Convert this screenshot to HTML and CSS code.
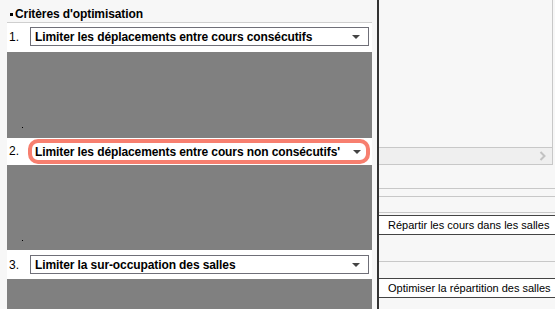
FILE: index.html
```html
<!DOCTYPE html>
<html lang="fr">
<head>
    <meta charset="UTF-8">
    <title>Critères d'optimisation</title>
    <link rel="stylesheet" href="styles.css">
</head>
<body>
    <div class="app">
        <!-- Critères -->
        <div class="criteres">
            <div class="titre"><span class="puce"></span>Critères d'optimisation</div>

            <div class="ligne ligne-1">
                <span class="num">1.</span>
                <div class="choix">
                    <span>Limiter les déplacements entre cours consécutifs</span>
                    <span class="fleche"></span>
                </div>
            </div>
            <div class="zone zone-1"><span class="point"></span></div>

            <div class="ligne ligne-2">
                <span class="num">2.</span>
                <div class="choix actif">
                    <span>Limiter les déplacements entre cours non consécutifs'</span>
                    <span class="fleche"></span>
                </div>
            </div>
            <div class="zone zone-2"><span class="point"></span></div>

            <div class="ligne ligne-3">
                <span class="num">3.</span>
                <div class="choix">
                    <span>Limiter la sur-occupation des salles</span>
                    <span class="fleche"></span>
                </div>
            </div>
            <div class="zone zone-3"></div>
        </div>

        <div class="separateur"></div>

        <!-- Panneau de droite -->
        <div class="droite">
            <div class="grille">
                <div class="grille-corps"></div>
                <div class="defilement">
                    <svg class="chevron" width="7" height="10" viewBox="0 0 7 10">
                        <polyline points="1.5,1 5.5,5 1.5,9" fill="none" stroke="#c2c2c2" stroke-width="2"/>
                    </svg>
                </div>
            </div>
            <div class="vide h23"></div>
            <div class="trait"></div>
            <div class="vide h7"></div>
            <div class="trait"></div>
            <div class="vide h15"></div>
            <div class="trait"></div>
            <div class="vide h2"></div>
            <div class="bouton">Répartir les cours dans les salles</div>
            <div class="vide h26"></div>
            <div class="trait"></div>
            <div class="vide h16"></div>
            <div class="bouton">Optimiser la répartition des salles</div>
        </div>
    </div>
</body>
</html>
```

FILE: styles.css
```css
/* base */
html, body {
    margin: 0;
    padding: 0;
}

body {
    font-family: "Liberation Sans", Arial, sans-serif;
    font-size: 11px;
    color: #000;
    background-color: #f7f7f7;
}

.app {
    display: flex;
    width: 555px;
    height: 309px;
    overflow: hidden;
}

/* colonne des critères */
.criteres {
    width: 365px;
    padding-left: 7px;
    padding-right: 5px;
    display: flex;
    flex-direction: column;
}

.titre {
    height: 26px;
    border-bottom: 1px solid #cfcfcf;
    font-weight: bold;
    font-size: 12px;
    letter-spacing: -0.1px;
    display: flex;
    align-items: center;
    padding-left: 3px;
    padding-top: 6px;
    box-sizing: border-box;
}

.puce {
    width: 3px;
    height: 3px;
    background-color: #000;
    margin-right: 2px;
    margin-top: 1px;
}

.ligne {
    display: flex;
    align-items: flex-start;
    background-color: #fff;
    flex-shrink: 0;
    box-sizing: border-box;
}

.ligne-1 {
    height: 29px;
    padding-top: 4px;
}

.ligne-2 {
    height: 27px;
    padding-top: 1px;
}

.ligne-3 {
    height: 29px;
    padding-top: 5px;
}

.num {
    width: 23px;
    padding-left: 2px;
    box-sizing: border-box;
    font-size: 12px;
    line-height: 20px;
}

.ligne-2 .num {
    line-height: 25px;
}

.choix {
    width: 339px;
    height: 19px;
    border: 1px solid #6f6f78;
    background-color: #fff;
    box-sizing: border-box;
    display: flex;
    align-items: center;
    justify-content: space-between;
    padding-left: 4px;
    padding-right: 8px;
    font-weight: bold;
    font-size: 12px;
    letter-spacing: -0.1px;
    white-space: nowrap;
}

.choix.actif {
    width: 342px;
    height: 25px;
    margin-left: -2px;
    border: 4px solid #f77f6f;
    border-radius: 10px;
    padding-left: 3px;
    padding-right: 5px;
}

.fleche {
    width: 0;
    height: 0;
    border-left: 4px solid transparent;
    border-right: 4px solid transparent;
    border-top: 4px solid #444;
}

.zone {
    background-color: #808080;
    flex-shrink: 0;
    padding-left: 15px;
    box-sizing: border-box;
}

.zone-1 {
    height: 86px;
    padding-top: 75px;
}

.zone-2 {
    height: 85px;
    padding-top: 75px;
}

.zone-3 {
    height: 30px;
}

.point {
    display: block;
    width: 1px;
    height: 1px;
    background-color: #000;
}

.separateur {
    width: 2px;
    background-color: #333;
    flex-shrink: 0;
}

/* panneau de droite */
.droite {
    flex: 1;
    display: flex;
    flex-direction: column;
}

.grille {
    width: 173px;
    height: 165px;
    border-right: 1px solid #c8c8c8;
    display: flex;
    flex-direction: column;
    flex-shrink: 0;
}

.grille-corps {
    height: 147px;
    border-bottom: 1px solid #c8c8c8;
}

.defilement {
    height: 16px;
    background-color: #efefef;
    border-bottom: 1px solid #c8c8c8;
    display: flex;
    align-items: center;
    justify-content: flex-end;
    padding-right: 6px;
}

.vide {
    flex-shrink: 0;
}

.h2 { height: 2px; }
.h7 { height: 7px; }
.h15 { height: 15px; }
.h16 { height: 16px; }
.h23 { height: 23px; }
.h26 { height: 26px; }

.trait {
    height: 1px;
    background-color: #c8c8c8;
    flex-shrink: 0;
}

.bouton {
    height: 20px;
    border-top: 1px solid #444;
    border-bottom: 1px solid #444;
    background-color: #fff;
    box-sizing: border-box;
    padding-left: 9px;
    line-height: 18px;
    font-size: 11px;
    white-space: nowrap;
    flex-shrink: 0;
}
```
